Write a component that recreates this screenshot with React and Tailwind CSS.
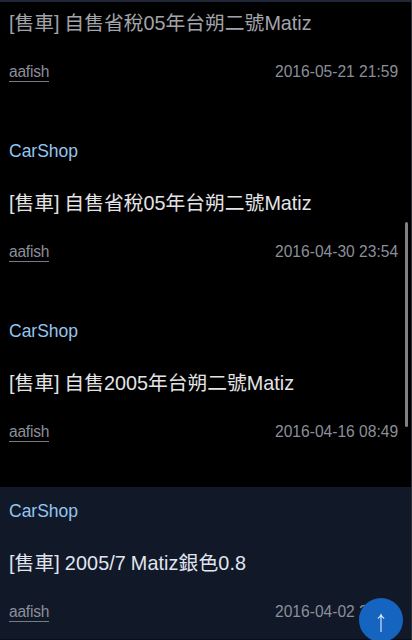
const posts = [
  { title: '[售車] 自售省稅05年台朔二號Matiz', date: '2016-05-21 21:59', titleStyle: 'text-[#a2a4ab]' },
  { board: 'CarShop', title: '[售車] 自售省稅05年台朔二號Matiz', date: '2016-04-30 23:54', titleStyle: 'text-[#e4e4e7]' },
  { board: 'CarShop', title: '[售車] 自售2005年台朔二號Matiz', date: '2016-04-16 08:49', titleStyle: 'text-[#e4e4e7]' },
  { board: 'CarShop', title: '[售車] 2005/7 Matiz銀色0.8', date: '2016-04-02 2', titleStyle: 'text-[#e0e5f0] tracking-[0.1px]', active: true },
];

function Post({ board, title, date, titleStyle, active }) {
  return (
    <article className={`h-[180px] shrink-0 pl-[9px] pr-[13px] pt-3 ${active ? 'bg-[#111827]' : 'bg-black'}`}>
      <div className="h-6 text-[17.5px] leading-6 text-[#93c5f0]">{board}</div>
      <h2 className={`mt-[26px] h-7 whitespace-nowrap text-[19.8px] leading-7 [word-spacing:-0.7px] ${titleStyle}`}>{title}</h2>
      <div className="mt-[25px] flex items-start justify-between text-[15.6px] text-[#8b8f9a]">
        <a className="h-[20px] border-b border-[#777b86] leading-[19px] tracking-[-0.25px]">aafish</a>
        <time className="w-[123px] whitespace-nowrap leading-[19px]">{date}</time>
      </div>
    </article>
  );
}

export default function App() {
  return (
    <main className="relative h-[640px] w-[412px] overflow-hidden border-r border-[#30323a] bg-black font-['Liberation_Sans','Noto_Sans_CJK_TC',sans-serif]">
      <div className="-mt-[53px] flex flex-col">
        {posts.map((post) => (
          <Post key={post.date} {...post} />
        ))}
      </div>
      <div className="absolute inset-x-0 top-0 h-[2px] bg-[#202637]" />
      <div className="absolute inset-x-0 bottom-0 h-px bg-[#090d17]" />
      <div className="absolute right-[3px] top-[222px] h-[205px] w-[3px] rounded-full bg-[#808080]" />
      <button aria-label="Top" className="absolute left-[359px] top-[598px] flex size-11 items-center justify-center rounded-full bg-[#1565c0]">
        <svg width="10" height="20" viewBox="0 0 10 20" fill="none" stroke="#e0ecfa" strokeWidth="1.1" className="mt-[6px]">
          <path d="M5 19V2M1.8 5.4C3.4 4.6 4.4 3.4 5 1.8C5.6 3.4 6.6 4.6 8.2 5.4" />
        </svg>
      </button>
    </main>
  );
}
